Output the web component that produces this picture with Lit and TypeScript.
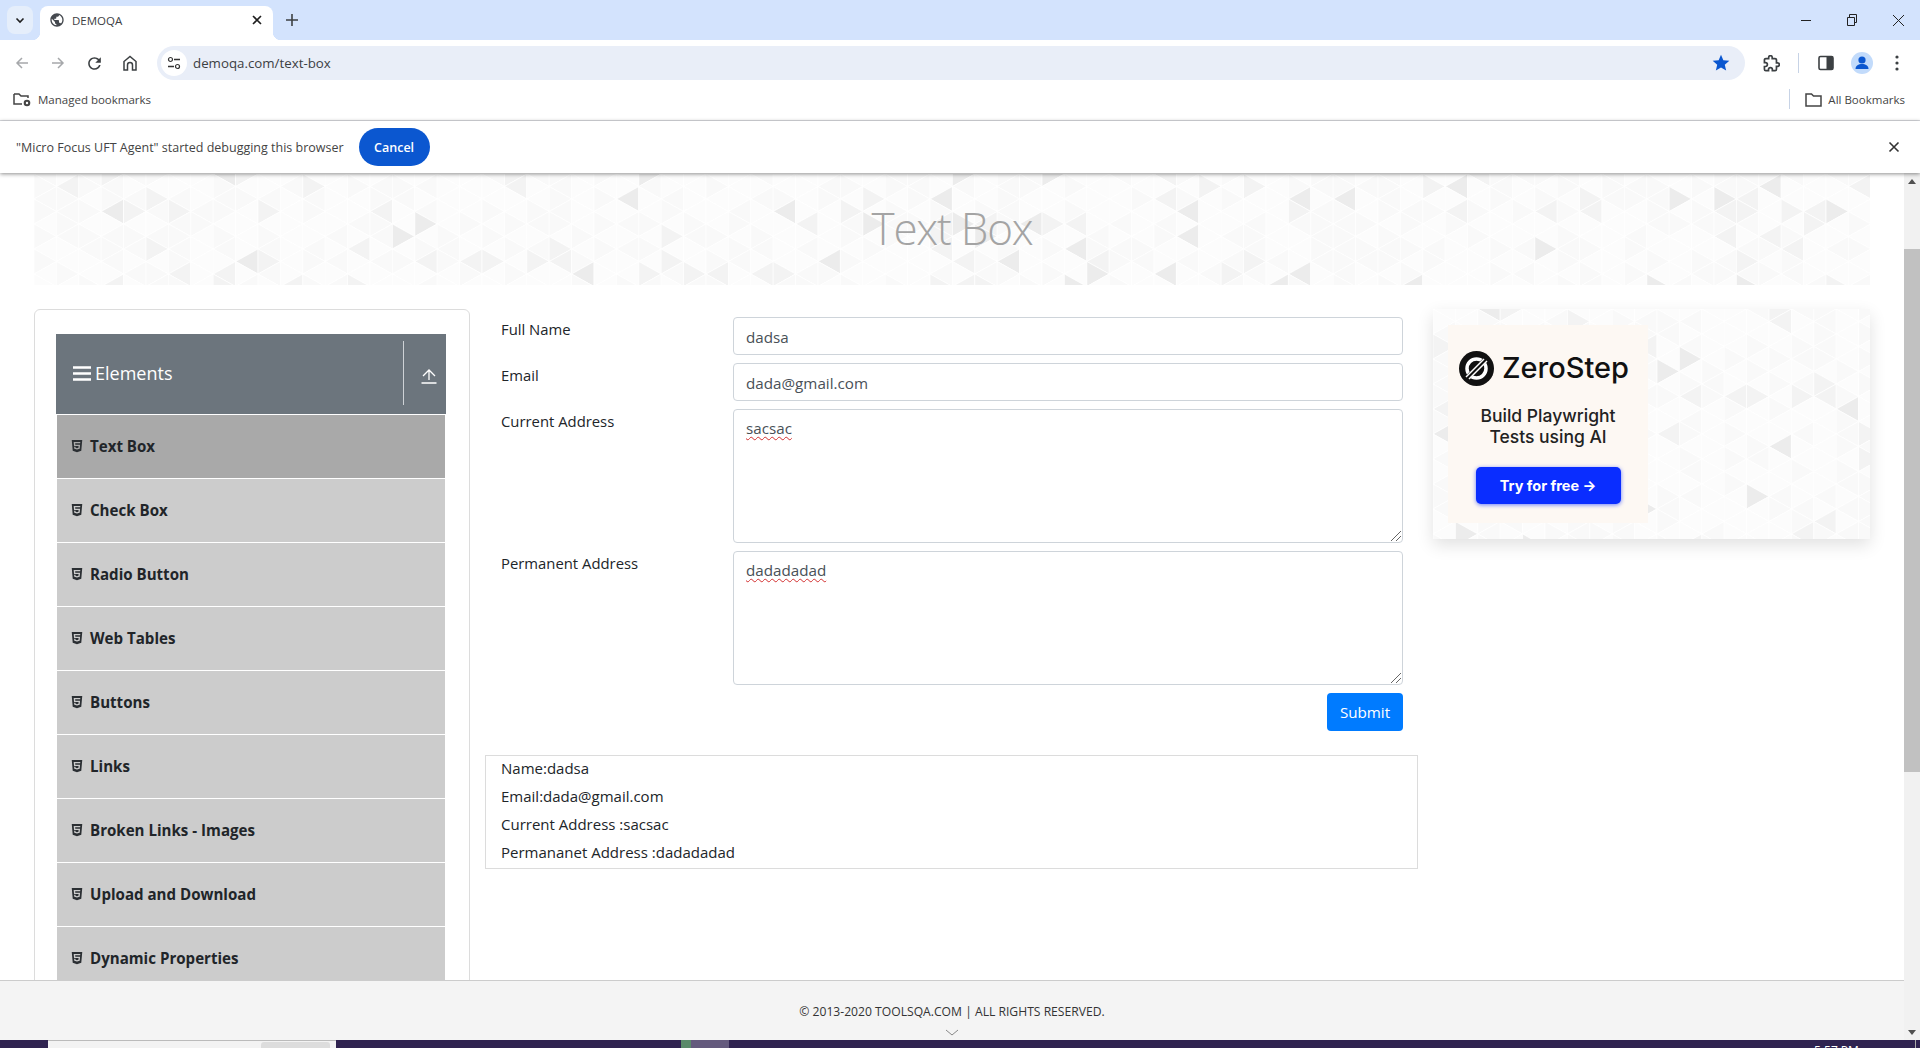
import { LitElement, html, css, svg } from "lit";
import { customElement } from "lit/decorators.js";

const hash = (a: number, b: number, c: number) => {
  const s = Math.sin(a * 127.1 + b * 311.7 + c * 74.7) * 43758.5453;
  return s - Math.floor(s);
};

const tri = (width: number, height: number, seed: number) => {
  const w = 22.4;
  const h = 25;
  const out: unknown[] = [];
  for (let k = 0; k * w < width; k++) {
    const x0 = k * w;
    const x1 = x0 + w;
    const odd = k % 2 === 1;
    for (let j = -1; j * h < height; j++) {
      const a = j * h;
      const pts = odd
        ? [`${x1},${a} ${x1},${a + h} ${x0},${a + h / 2}`, `${x0},${a + h / 2} ${x0},${a + 1.5 * h} ${x1},${a + h}`]
        : [`${x0},${a} ${x0},${a + h} ${x1},${a + h / 2}`, `${x1},${a + h / 2} ${x1},${a + 1.5 * h} ${x0},${a + h}`];
      pts.forEach((p, i) => {
        const r = hash(k + seed, j, i);
        const fill = r > 0.95 ? "#ececec" : r > 0.86 ? "#f3f3f3" : r > 0.5 ? "#f9f9f9" : "#fcfcfc";
        out.push(svg`<polygon points=${p} fill=${fill} stroke="#fff" stroke-opacity=".7" stroke-width="1"></polygon>`);
      });
    }
  }
  return html`<svg class="pattern" width=${width} height=${height} viewBox="0 0 ${width} ${height}" aria-hidden="true">${out}</svg>`;
};

const html5 = html`<svg class="h5" viewBox="0 0 384 512"><path fill="currentColor" d="M0 32l34.9 395.8L191.5 480l157.6-52.2L384 32H0zm308.2 127.9H124.4l4.1 49.4h175.6l-13.6 148.4-97.9 27v.3h-1.1l-98.7-27.3-6-75.8h47.7L138 320l53.5 14.5 53.7-14.5 6-62.2H84.3L71.5 112.2h241.1l-4.4 47.7z"/></svg>`;
const grip = html`<svg class="grip" width="12" height="12" viewBox="0 0 12 12"><path d="M1 11L11 1M6 11l5-5" stroke="#666" stroke-width="1" fill="none"/></svg>`;

@customElement("app-root")
export class AppRoot extends LitElement {
  static styles = css`
    :host { display: flex; flex-direction: column; width: 1920px; height: 1048px; overflow: hidden; background: #fff; font-family: "Open Sans", "Noto Sans", sans-serif; color: #212529; }
    * { box-sizing: border-box; }
    svg { display: block; flex: none; }

    .tabs { height: 40px; background: #d3e3fd; display: flex; align-items: flex-end; padding-left: 7px; flex: none; position: relative; }
    .tabsearch { width: 26px; height: 28px; margin-bottom: 6px; border-radius: 8px; background: #e5eefb; display: flex; align-items: center; justify-content: center; }
    .tab { width: 233px; height: 34px; margin-left: 7px; background: #fff; border-radius: 8px 8px 0 0; display: flex; align-items: center; padding: 0 10px 6px 9px; position: relative; }
    .tab::before, .tab::after { content: ""; position: absolute; bottom: 0; width: 8px; height: 8px; }
    .tab::before { left: -8px; background: radial-gradient(circle at 0 0, transparent 8px, #fff 8.5px); }
    .tab::after { right: -8px; background: radial-gradient(circle at 100% 0, transparent 8px, #fff 8.5px); }
    .tab-title { font-size: 11.5px; margin-left: 7px; flex: 1; color: #3c4043; }
    .newtab { margin: 0 0 6px 12px; height: 28px; display: flex; align-items: center; }
    .winctl { margin-left: auto; display: flex; height: 100%; align-items: center; padding-right: 15px; gap: 34px; }

    .toolbar { height: 40px; flex: none; display: flex; align-items: center; background: #fff; padding: 6px 0 0 4px; position: relative; }
    .navbtn { width: 36px; display: flex; justify-content: center; }
    .pill { margin-left: 9px; width: 1588px; height: 34px; border-radius: 17px; background: #e9eef8; display: flex; align-items: center; padding: 0 14px 0 4px; }
    .site { width: 26px; height: 26px; border-radius: 50%; background: #fff; display: flex; align-items: center; justify-content: center; }
    .url { font-size: 13.3px; margin-left: 6px; color: #3c4043; flex: 1; }
    .tb-right { display: flex; align-items: center; margin-left: 18px; }
    .tb-sep { width: 1px; height: 20px; background: #c7d3e6; margin: 0 19px 0 18px; }
    .tb-profile { margin-left: 17px; }
    .tb-menu { margin-left: 22px; }

    .bookmarks { flex: none; display: flex; align-items: center; padding: 0 15px 2px 13px; font-size: 11.5px; color: #444; border-bottom: 1px solid #dadce0; height: 41px; }
    .bookmarks .vsep { width: 1px; height: 20px; background: #c7d3e6; margin: 0 15px 0 auto; }
    .bm-label { margin-left: 6px; }
    .bm-all { margin-left: 6px; }

    .infobar { height: 52px; flex: none; display: flex; align-items: center; padding: 0 20px 0 16px; font-size: 12.5px; color: #444; background: #fff; position: relative; z-index: 2; box-shadow: 0 1px 4px rgba(0,0,0,.45); }
    .cancel { margin-left: 15px; height: 38px; width: 71px; border-radius: 19px; background: #0b57d0; color: #fff; font: 600 12.5px "Open Sans", sans-serif; display: flex; align-items: center; justify-content: center; border: 0; }
    .info-x { margin-left: auto; }

    .page { flex: 1; min-height: 0; display: flex; }
    .pagecol { flex: 1; min-width: 0; display: flex; flex-direction: column; }
    .content { flex: 1; min-height: 0; overflow: hidden; padding: 1px 34px 0; }
    .banner { height: 111px; position: relative; overflow: hidden; display: flex; align-items: center; justify-content: center; background: #fcfcfc; padding-bottom: 4px; }
    .pattern { position: absolute; left: 0; top: 0; filter: blur(.6px); }
    h1 { position: relative; margin: 0; font-size: 44px; letter-spacing: -1.2px; font-weight: 300; color: #a4a4a4; line-height: 1; }
    .row { display: flex; gap: 15px; margin-top: 24px; align-items: flex-start; }

    .side { width: 436px; flex: none; border: 1px solid #dcdcdc; border-radius: 6px; padding: 24px 23px 0 21px; height: 800px; }
    .head { height: 80px; background: #6c757d; margin-bottom: 1px; display: flex; align-items: center; color: #fff; padding: 0 0 2px 17px; }
    .head-title { font-size: 18px; margin-left: 4px; flex: 1; }
    .head-div { width: 1px; height: 64px; background: #ced2d6; margin-right: 17px; }
    .head-up { margin-right: 9px; margin-top: 6px; }
    .item { height: 63px; margin: 0 1px 1px; background: #ccc; display: flex; align-items: center; padding: 0 0 2px 14px; font-size: 15.1px; font-weight: 700; color: #212529; }
    .item.active { background: #a9a9a9; }
    .h5 { width: 12px; height: 14px; margin-right: 7px; color: #2b2f33; }

    .main { width: 933px; flex: none; padding-top: 8px; }
    .frow { display: grid; grid-template-columns: 233px 700px; margin-bottom: 8px; }
    .frow label { padding: 0 15px 0 16px; font-size: 14.85px; line-height: 24px; }
    .fcell { padding: 0 15px; }
    input, .ta { width: 100%; border: 1px solid #ced4da; border-radius: 4px; font: 15.2px/24px "Open Sans", sans-serif; color: #495057; padding: 6px 12px; display: block; background: #fff; outline: none; }
    input { height: 38px; padding-top: 7px; padding-bottom: 5px; }
    .ta { height: 134px; position: relative; }
    .ta span { text-decoration: underline wavy #d32f2f 1px; text-underline-offset: 2px; }
    .grip { position: absolute; right: 0; bottom: 0; }
    .actions { display: flex; justify-content: flex-end; padding-right: 15px; }
    .submit { width: 76px; height: 38px; border-radius: 4px; border: 0; background: #007bff; color: #fff; font: 15.2px "Open Sans", sans-serif; }
    .output { margin-top: 24px; height: 114px; border: 1px solid #dcdcdc; padding-left: 15px; font-size: 15px; line-height: 28px; color: #212529; overflow: hidden; }
    .output-lines { margin-top: -2px; }

    .ad { width: 437px; height: 230px; position: relative; overflow: hidden; background: #fcfcfc; }
    .adshadow { width: 437px; flex: none; height: 230px; box-shadow: 0 6px 16px rgba(0,0,0,.12); }
    .adin { position: absolute; left: 15px; top: 16px; width: 200px; height: 198px; background: #fdf8f3; display: flex; flex-direction: column; align-items: center; font-family: Inter, sans-serif; color: #111; }
    .brand { display: flex; align-items: center; margin: 25px 8px 0 0; font-size: 29px; font-weight: 500; gap: 8px; line-height: 36px; }
    .ad-t { margin-top: 19px; font-size: 17.5px; font-weight: 500; line-height: 21px; text-align: center; color: #222; }
    .try { margin-top: 20px; width: 145px; height: 37px; border-radius: 5px; background: #0a2dff; color: #fff; font-size: 14.5px; font-weight: 700; display: flex; align-items: center; justify-content: center; box-shadow: 0 1px 4px rgba(10,45,255,.6); }

    .footer { height: 60px; flex: none; background: #f4f4f4; border-top: 1px solid #ccc; display: flex; flex-direction: column; align-items: center; font-size: 12.15px; color: #333; padding-top: 22px; }
    .footer svg { margin-top: 9px; }

    .scroll { width: 16px; flex: none; background: #f1f1f1; display: flex; flex-direction: column; align-items: center; }
    .scroll-arrow { height: 16px; flex: none; display: flex; align-items: center; justify-content: center; }
    .thumb { width: 100%; height: 523px; background: #c1c1c1; margin-top: 60px; }
    .scroll .spacer { flex: 1; }

    .taskbar { height: 8px; flex: none; background: #2f2350; display: flex; overflow: hidden; position: relative; }
    .search { width: 288px; margin-left: 48px; background: #f3f3f3; border-top: 1px solid #bbb; padding: 1px 6px 0 213px; }
    .search div { height: 8px; background: #ddd; border-radius: 3px 3px 0 0; }
    .tb1 { width: 10px; margin-left: 345px; background: #5a8a6a; }
    .tb2 { width: 38px; background: #645a7d; }
    .clock { margin-left: 1085px; width: 60px; color: #fff; font-size: 12px; line-height: 16px; padding-top: 3px; white-space: nowrap; }
    .tline { width: 1px; background: #aaa; margin-left: 41px; }
  `;

  render() {
    const items = ["Text Box", "Check Box", "Radio Button", "Web Tables", "Buttons", "Links", "Broken Links - Images", "Upload and Download", "Dynamic Properties"];
    return html`
      <div class="tabs">
        <div class="tabsearch"><svg width="12" height="12" viewBox="0 0 12 12"><path d="M2.5 4.5L6 8l3.5-3.5" stroke="#1f1f1f" stroke-width="1.6" fill="none"/></svg></div>
        <div class="tab">
          <svg width="16" height="16" viewBox="0 0 24 24"><path fill="#45494f" d="M12 2C6.48 2 2 6.48 2 12s4.48 10 10 10 10-4.48 10-10S17.52 2 12 2zm-1 17.93c-3.95-.49-7-3.85-7-7.93 0-.62.08-1.21.21-1.79L9 15v1c0 1.1.9 2 2 2v1.93zm6.9-2.54c-.26-.81-1-1.39-1.9-1.39h-1v-3c0-.55-.45-1-1-1H8v-2h2c.55 0 1-.45 1-1V7h2c1.1 0 2-.9 2-2v-.41c2.93 1.19 5 4.06 5 7.41 0 2.08-.8 3.97-2.1 5.39z"/></svg>
          <span class="tab-title">DEMOQA</span>
          <svg width="12" height="12" viewBox="0 0 12 12"><path d="M2 2l8 8M10 2l-8 8" stroke="#1f1f1f" stroke-width="1.6"/></svg>
        </div>
        <div class="newtab"><svg width="14" height="14" viewBox="0 0 14 14"><path d="M7 1v12M1 7h12" stroke="#3c4043" stroke-width="1.6"/></svg></div>
        <div class="winctl">
          <svg width="12" height="12" viewBox="0 0 12 12"><path d="M1 6.5h10" stroke="#222" stroke-width="1"/></svg>
          <svg width="12" height="12" viewBox="0 0 12 12"><path d="M1.5 3.5h7v8h-7zM3.5 3.5V.5h7v8h-2" stroke="#222" stroke-width="1" fill="none"/></svg>
          <svg width="13" height="13" viewBox="0 0 13 13"><path d="M1 1l11 11M12 1L1 12" stroke="#222" stroke-width="1"/></svg>
        </div>
      </div>

      <div class="toolbar">
        <div class="navbtn"><svg width="16" height="16" viewBox="0 0 16 16"><path d="M14 8H3M8 3L3 8l5 5" stroke="#a6a8ab" stroke-width="1.5" fill="none"/></svg></div>
        <div class="navbtn"><svg width="16" height="16" viewBox="0 0 16 16"><path d="M2 8h11M8 3l5 5-5 5" stroke="#a6a8ab" stroke-width="1.5" fill="none"/></svg></div>
        <div class="navbtn"><svg width="19" height="19" viewBox="0 0 24 24"><path fill="#3c4043" d="M17.65 6.35C16.2 4.9 14.21 4 12 4c-4.42 0-7.99 3.58-7.99 8s3.57 8 7.99 8c3.73 0 6.84-2.55 7.73-6h-2.08c-.82 2.33-3.04 4-5.65 4-3.31 0-6-2.69-6-6s2.69-6 6-6c1.66 0 3.14.69 4.22 1.78L13 11h7V4l-2.35 2.35z"/></svg></div>
        <div class="navbtn"><svg width="18" height="18" viewBox="0 0 18 18"><path d="M3 16V7.5L9 2.5l6 5V16h-3.5v-5a2.5 2.5 0 0 0-5 0v5z" stroke="#3c4043" stroke-width="1.5" fill="none"/></svg></div>
        <div class="pill">
          <div class="site"><svg width="14" height="14" viewBox="0 0 14 14"><circle cx="3.5" cy="3.5" r="2" fill="none" stroke="#333" stroke-width="1.2"/><path d="M7 3.5h6M1 10.5h6" stroke="#333" stroke-width="1.4"/><circle cx="10.5" cy="10.5" r="2" fill="none" stroke="#333" stroke-width="1.2"/></svg></div>
          <span class="url">demoqa.com/text-box</span>
          <svg width="20" height="20" viewBox="0 0 24 24"><path fill="#0b57d0" d="M12 17.27L18.18 21l-1.64-7.03L22 9.24l-7.19-.61L12 2 9.19 8.63 2 9.24l5.46 4.73L5.82 21z"/></svg>
        </div>
        <div class="tb-right">
          <svg width="17" height="17" viewBox="0 0 24 24"><path fill="none" stroke="#3c4043" stroke-width="2.4" d="M20.5 11H19V7c0-1.1-.9-2-2-2h-4V3.5C13 2.12 11.88 1 10.5 1S8 2.12 8 3.5V5H4c-1.1 0-1.99.9-1.99 2v3.8H3.5c1.49 0 2.7 1.21 2.7 2.7s-1.21 2.7-2.7 2.7H2V20c0 1.1.9 2 2 2h3.8v-1.5c0-1.49 1.21-2.7 2.7-2.7 1.49 0 2.7 1.21 2.7 2.7V22H17c1.1 0 2-.9 2-2v-4h1.5c1.38 0 2.5-1.12 2.5-2.5S21.88 11 20.5 11z"/></svg>
          <div class="tb-sep"></div>
          <svg width="16" height="16" viewBox="0 0 16 16"><rect x="1" y="1.5" width="14" height="13" rx="1.5" fill="none" stroke="#3c4043" stroke-width="1.6"/><rect x="8.5" y="1.5" width="6.5" height="13" fill="#3c4043"/></svg>
          <svg class="tb-profile" width="22" height="22" viewBox="0 0 22 22"><circle cx="11" cy="11" r="11" fill="#c2dbfb"/><circle cx="11" cy="8" r="3.6" fill="#0b57d0"/><path d="M4.5 17c0-3.5 3-5 6.5-5s6.5 1.5 6.5 5z" fill="#0b57d0"/></svg>
          <svg class="tb-menu" width="4" height="16" viewBox="0 0 4 16"><circle cx="2" cy="2" r="1.6" fill="#3c4043"/><circle cx="2" cy="8" r="1.6" fill="#3c4043"/><circle cx="2" cy="14" r="1.6" fill="#3c4043"/></svg>
        </div>
      </div>

      <div class="bookmarks">
        <svg width="19" height="16" viewBox="0 0 19 16"><path d="M1 3h5l2 2h7v2M1 3v10h8" stroke="#444" stroke-width="1.5" fill="none"/><circle cx="14" cy="12" r="3.3" fill="#444"/><circle cx="14" cy="12" r="1.2" fill="#fff"/></svg>
        <span class="bm-label">Managed bookmarks</span>
        <div class="vsep"></div>
        <svg width="17" height="15" viewBox="0 0 17 15"><path d="M1 2h5.5l2 2H16v10H1z" stroke="#444" stroke-width="1.5" fill="none"/></svg>
        <span class="bm-all">All Bookmarks</span>
      </div>

      <div class="infobar">
        <span>"Micro Focus UFT Agent" started debugging this browser</span>
        <button class="cancel">Cancel</button>
        <svg class="info-x" width="12" height="12" viewBox="0 0 12 12"><path d="M1.5 1.5l9 9M10.5 1.5l-9 9" stroke="#333" stroke-width="1.6"/></svg>
      </div>

      <div class="page">
        <div class="pagecol">
          <div class="content">
            <div class="banner">
              ${tri(1836, 111, 3)}
              <h1>Text Box</h1>
            </div>
            <div class="row">
              <div class="side">
                <div class="head">
                  <svg width="18" height="15" viewBox="0 0 18 15"><path d="M0 1.5h18M0 7.5h18M0 13.5h18" stroke="#fff" stroke-width="2.6"/></svg>
                  <span class="head-title">Elements</span>
                  <div class="head-div"></div>
                  <svg class="head-up" width="16" height="16" viewBox="0 0 16 16"><path d="M8 12V2M2 8l6-6 6 6M.5 15h15" stroke="#fff" stroke-width="1.3" fill="none"/></svg>
                </div>
                ${items.map((t, i) => html`<div class="item ${i === 0 ? "active" : ""}">${html5}<span>${t}</span></div>`)}
              </div>

              <div class="main">
                <div class="frow"><label>Full Name</label><div class="fcell"><input .value=${"dadsa"} /></div></div>
                <div class="frow"><label>Email</label><div class="fcell"><input .value=${"dada@gmail.com"} /></div></div>
                <div class="frow"><label>Current Address</label><div class="fcell"><div class="ta"><span>sacsac</span>${grip}</div></div></div>
                <div class="frow"><label>Permanent Address</label><div class="fcell"><div class="ta"><span>dadadadad</span>${grip}</div></div></div>
                <div class="actions"><button class="submit">Submit</button></div>
                <div class="output">
                  <div class="output-lines">
                    <div>Name:dadsa</div>
                    <div>Email:dada@gmail.com</div>
                    <div>Current Address :sacsac</div>
                    <div>Permananet Address :dadadadad</div>
                  </div>
                </div>
              </div>

              <div class="adshadow">
                <div class="ad">
                  ${tri(437, 230, 9)}
                  <div class="adin">
                    <div class="brand">
                      <svg width="35" height="35" viewBox="0 0 35 35"><circle cx="17.5" cy="17.5" r="17.5" fill="#111"/><circle cx="17.5" cy="17.5" r="9.5" fill="none" stroke="#fff" stroke-width="3.5"/><path d="M8 27L27 8" stroke="#111" stroke-width="5"/><path d="M7 26L25 8M10 28L28 10" stroke="#fff" stroke-width="1.5"/></svg>
                      <span>ZeroStep</span>
                    </div>
                    <div class="ad-t">Build Playwright<br />Tests using AI</div>
                    <div class="try">Try for free →</div>
                  </div>
                </div>
              </div>
            </div>
          </div>
          <div class="footer">
            <span>© 2013-2020 TOOLSQA.COM | ALL RIGHTS RESERVED.</span>
            <svg width="14" height="7" viewBox="0 0 14 7"><path d="M1 1l6 5 6-5" stroke="#888" stroke-width="1" fill="none"/></svg>
          </div>
        </div>
        <div class="scroll">
          <div class="scroll-arrow"><svg width="8" height="5" viewBox="0 0 8 5"><path d="M4 0l4 5H0z" fill="#505050"/></svg></div>
          <div class="thumb"></div>
          <div class="spacer"></div>
          <div class="scroll-arrow"><svg width="8" height="5" viewBox="0 0 8 5"><path d="M4 5L0 0h8z" fill="#505050"/></svg></div>
        </div>
      </div>

      <div class="taskbar">
        <div class="search"><div></div></div>
        <div class="tb1"></div>
        <div class="tb2"></div>
        <div class="clock">5:57 PM</div>
        <div class="tline"></div>
      </div>
    `;
  }
}
